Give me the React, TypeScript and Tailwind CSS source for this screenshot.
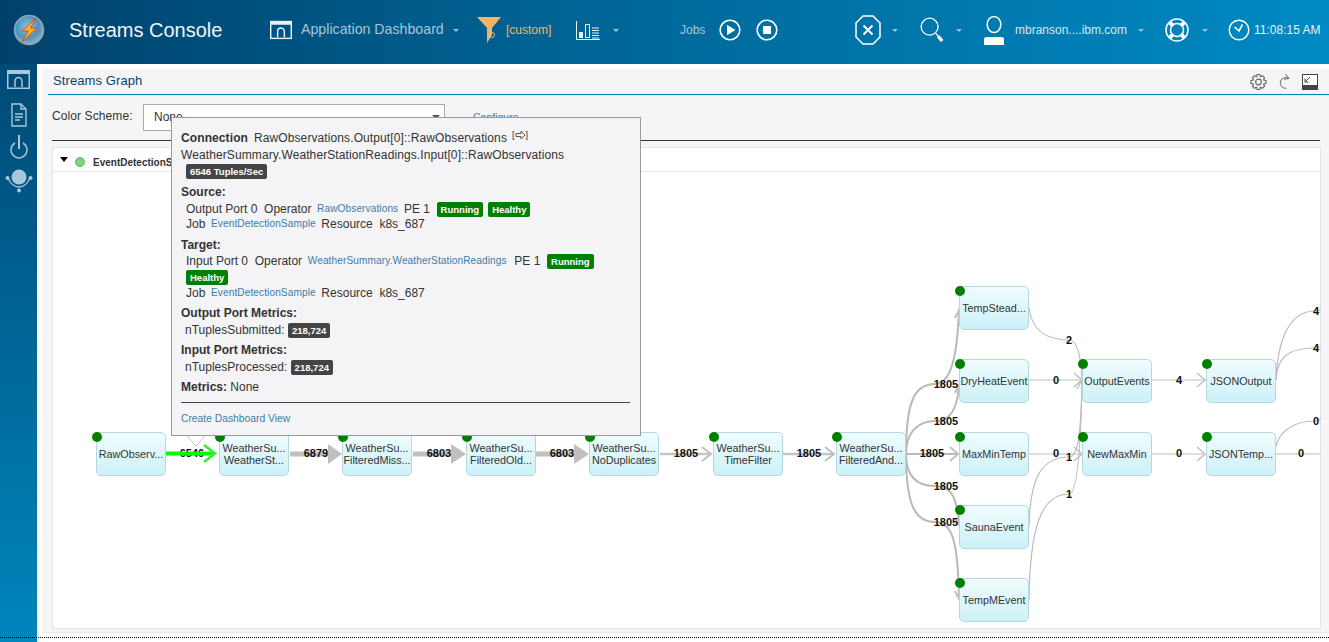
import React from 'react';

type GraphNode = { x: number; y: number; lines: string[] };

const nodes: GraphNode[] = [
  { x: 96, y: 432, lines: ['RawObserv...'] },
  { x: 219, y: 432, lines: ['WeatherSu...', 'WeatherSt...'] },
  { x: 342, y: 432, lines: ['WeatherSu...', 'FilteredMiss...'] },
  { x: 466, y: 432, lines: ['WeatherSu...', 'FilteredOld...'] },
  { x: 589, y: 432, lines: ['WeatherSu...', 'NoDuplicates'] },
  { x: 713, y: 432, lines: ['WeatherSu...', 'TimeFilter'] },
  { x: 836, y: 432, lines: ['WeatherSu...', 'FilteredAnd...'] },
  { x: 959, y: 286, lines: ['TempStead...'] },
  { x: 959, y: 359, lines: ['DryHeatEvent'] },
  { x: 959, y: 432, lines: ['MaxMinTemp'] },
  { x: 959, y: 505, lines: ['SaunaEvent'] },
  { x: 959, y: 578, lines: ['TempMEvent'] },
  { x: 1082, y: 359, lines: ['OutputEvents'] },
  { x: 1082, y: 432, lines: ['NewMaxMin'] },
  { x: 1206, y: 359, lines: ['JSONOutput'] },
  { x: 1206, y: 432, lines: ['JSONTemp...'] },
];

const labels: { x: number; y: number; t: string }[] = [
  { x: 192, y: 453, t: '6546' },
  { x: 316, y: 453, t: '6879' },
  { x: 439, y: 453, t: '6803' },
  { x: 562, y: 453, t: '6803' },
  { x: 686, y: 453, t: '1805' },
  { x: 809, y: 453, t: '1805' },
  { x: 946, y: 384, t: '1805' },
  { x: 946, y: 421, t: '1805' },
  { x: 932, y: 453, t: '1805' },
  { x: 946, y: 486, t: '1805' },
  { x: 946, y: 522, t: '1805' },
  { x: 1069, y: 340, t: '2' },
  { x: 1056, y: 380, t: '0' },
  { x: 1056, y: 453, t: '0' },
  { x: 1069, y: 457, t: '1' },
  { x: 1069, y: 494, t: '1' },
  { x: 1179, y: 380, t: '4' },
  { x: 1179, y: 453, t: '0' },
  { x: 1316, y: 311, t: '4' },
  { x: 1316, y: 348, t: '4' },
  { x: 1316, y: 421, t: '0' },
  { x: 1301, y: 453, t: '0' },
];

const Caret = ({ className = '' }: { className?: string }) => (
  <span className={`inline-block w-0 h-0 border-l-[3px] border-r-[3px] border-t-[3px] border-l-transparent border-r-transparent border-t-[#9fc0d6] ${className}`} />
);

const DashIcon = ({ className = '' }: { className?: string }) => (
  <svg viewBox="0 0 23 19" className={className} fill="none" stroke="currentColor">
    <rect x="0.75" y="0.75" width="21.5" height="17.5" strokeWidth="1.5" />
    <rect x="0" y="0" width="23" height="4" fill="currentColor" stroke="none" />
    <path d="M8 17V11a3.5 3.5 0 0 1 7 0V17" strokeWidth="1.5" />
  </svg>
);

const Logo = () => (
  <svg viewBox="0 0 32 32" className="w-8 h-8">
    <defs>
      <radialGradient id="lg" cx="45%" cy="40%" r="60%">
        <stop offset="0%" stopColor="#8cc4e0" />
        <stop offset="65%" stopColor="#4d93bf" />
        <stop offset="100%" stopColor="#a4b0b6" />
      </radialGradient>
    </defs>
    <circle cx="16" cy="16" r="14.5" fill="url(#lg)" stroke="#8ba6b4" strokeWidth="1.5" />
    <path d="M23 4 L9 17 L15 17 L9 28 L24 14 L17.5 14 Z" fill="#f7b02c" stroke="#d8431f" strokeWidth="0.9" />
  </svg>
);

const HeaderIcons = {
  funnel: (
    <svg viewBox="0 0 24 26" className="w-6 h-[26px]">
      <path d="M0 0H24L15 11V18L10 26V11Z" fill="#f2b468" />
      <circle cx="15" cy="18" r="2.5" fill="none" stroke="#f2b468" />
    </svg>
  ),
  bars: (
    <svg viewBox="0 0 25 19" className="w-[25px] h-[19px]" fill="none" stroke="#e8f1f7">
      <path d="M0.5 0V18.5H24" />
      <rect x="3" y="11" width="4" height="6" fill="#e8f1f7" stroke="none" />
      <rect x="9.5" y="3.5" width="4" height="13" />
      <path d="M16 7H23M16 9.5H23M16 12H23M16 14.5H23M16 17H23" strokeWidth="1.2" />
    </svg>
  ),
  play: (
    <svg viewBox="0 0 22 22" className="w-[22px] h-[22px]" fill="none" stroke="#fff" strokeWidth="1.6">
      <circle cx="11" cy="11" r="9.8" />
      <path d="M8 5.8L16.5 11L8 16.2Z" fill="#fff" stroke="none" />
    </svg>
  ),
  stop: (
    <svg viewBox="0 0 22 22" className="w-[22px] h-[22px]" fill="none" stroke="#fff" strokeWidth="1.6">
      <circle cx="11" cy="11" r="9.8" />
      <rect x="7" y="7" width="8" height="8" fill="#fff" stroke="none" />
    </svg>
  ),
  octagon: (
    <svg viewBox="0 0 26 30" className="w-[26px] h-[30px]" fill="none" stroke="#fff" strokeWidth="1.5">
      <path d="M8 1H18L25 8V22L18 29H8L1 22V8Z" />
      <path d="M8.5 10.5L17.5 19.5M17.5 10.5L8.5 19.5" strokeWidth="2" />
    </svg>
  ),
  search: (
    <svg viewBox="0 0 25 29" className="w-6 h-7" fill="none" stroke="#fff">
      <circle cx="10" cy="11" r="8.8" strokeWidth="1.4" />
      <path d="M16.5 18L23 26" strokeWidth="1.4" />
      <path d="M19 21L23 26" strokeWidth="3.5" />
    </svg>
  ),
  user: (
    <svg viewBox="0 0 20 30" className="w-5 h-[30px]" fill="none" stroke="#fff" strokeWidth="1.5">
      <ellipse cx="10" cy="9.5" rx="6.8" ry="8" />
      <path d="M0 30V24Q0 22 3 22H17Q20 22 20 24V30Z" fill="#fff" stroke="none" />
    </svg>
  ),
  buoy: (
    <svg viewBox="0 0 24 24" className="w-6 h-6" fill="none" stroke="#fff" strokeWidth="1.5">
      <circle cx="12" cy="12" r="11" />
      <circle cx="12" cy="12" r="6.5" />
      <path d="M5 4.5L8 8M19 4.5L16 8M5 19.5L8 16M19 19.5L16 16" strokeWidth="4" />
    </svg>
  ),
  clock: (
    <svg viewBox="0 0 22 22" className="w-[22px] h-[22px]" fill="none" stroke="#fff" strokeWidth="1.4">
      <circle cx="11" cy="11" r="9.8" />
      <path d="M6.5 8L11 12L14.5 5.5" strokeWidth="1.6" />
    </svg>
  ),
};

const Header = () => (
  <header className="h-16 shrink-0 flex items-center pb-[4px] bg-gradient-to-r from-[#00416c] via-[#006a9c] to-[#008ac4] text-white">
    <div className="ml-[13px] w-8 h-8"><Logo /></div>
    <span className="ml-[24px] w-[201px] text-[20px] text-[#f2f6f9]">Streams Console</span>
    <DashIcon className="w-[22px] h-[20px] text-[#e8f1f7]" />
    <span className="ml-[9px] w-[143px] text-[14.2px] text-[#a9c5d9] whitespace-nowrap">Application Dashboard</span>
    <Caret className="ml-[9px]" />
    <div className="ml-[18px] w-6 h-[26px]">{HeaderIcons.funnel}</div>
    <span className="ml-[5px] w-[46px] text-[12px] text-[#f2b468]">[custom]</span>
    <div className="ml-[24px] w-[25px] h-[19px]">{HeaderIcons.bars}</div>
    <Caret className="ml-[12px]" />
    <span className="ml-[61px] w-[28px] text-[12px] text-[#a9c5d9]">Jobs</span>
    <div className="ml-[11px] h-[22px]">{HeaderIcons.play}</div>
    <div className="ml-[15px] h-[22px]">{HeaderIcons.stop}</div>
    <div className="ml-[77px] h-[30px]">{HeaderIcons.octagon}</div>
    <Caret className="ml-[11px]" />
    <div className="ml-[22px] h-7">{HeaderIcons.search}</div>
    <Caret className="ml-[12px]" />
    <div className="ml-[22px] h-[30px]">{HeaderIcons.user}</div>
    <span className="ml-[11px] w-[114px] text-[12px] text-[#d7e6f0] whitespace-nowrap">mbranson....ibm.com</span>
    <Caret className="ml-[9px]" />
    <div className="ml-[21px] h-6">{HeaderIcons.buoy}</div>
    <Caret className="ml-[13px]" />
    <div className="ml-[20px] h-[22px]">{HeaderIcons.clock}</div>
    <span className="ml-[4px] text-[12px] text-[#e8f1f7] whitespace-nowrap">11:08:15 AM</span>
  </header>
);

const Sidebar = () => (
  <aside className="w-[37px] shrink-0 flex flex-col items-center pt-[6px] bg-gradient-to-b from-[#004a76] to-[#0086bd] text-[#a9c6da]">
    <DashIcon className="w-[23px] h-[19px]" />
    <svg viewBox="0 0 16 24" className="mt-[14px] w-4 h-6" fill="none" stroke="currentColor" strokeWidth="1.4">
      <path d="M1 1H10L15 6V23H1Z" />
      <path d="M10 1V6H15" />
      <path d="M4 11H12M4 14H12M4 17H9" />
    </svg>
    <svg viewBox="0 0 18 24" className="mt-[8px] w-[18px] h-6" fill="none" stroke="currentColor" strokeWidth="1.5">
      <path d="M5 8A8 8 0 1 0 13 8" />
      <path d="M9 0V14" strokeWidth="2" />
    </svg>
    <svg viewBox="0 0 28 24" className="mt-[10px] w-7 h-6" fill="currentColor">
      <circle cx="14" cy="8" r="7.5" />
      <path d="M3 9Q7 18 14 18T25 9" fill="none" stroke="currentColor" strokeWidth="1.3" />
      <circle cx="2.5" cy="9" r="2" />
      <circle cx="25.5" cy="9" r="2" />
      <circle cx="14" cy="21.5" r="2" />
    </svg>
  </aside>
);

const Badge = ({ children, green }: { children: React.ReactNode; green?: boolean }) => (
  <span className={`inline-block h-[15px] px-[4px] rounded-[2px] text-[9.5px] leading-[15px] font-bold text-white align-middle whitespace-nowrap ${green ? 'bg-[#008000]' : 'bg-[#444444]'}`}>
    {children}
  </span>
);

const A = ({ children }: { children: React.ReactNode }) => (
  <span className="-mx-px text-[#3c7da8] text-[10.1px] tracking-[0.1px]">{children}</span>
);

const Tooltip = () => (
  <div className="absolute left-[171px] top-[117px] w-[470px] h-[319px] z-20 bg-[#f4f4f6] border border-[#9a9a9a] pl-[9px] pr-[10px] pt-[12px] text-[12px] leading-[16px] text-[#333333]">
    <div className="whitespace-nowrap tracking-[0.1px]">
      <b>Connection</b>
      <span className="ml-[6px]">RawObservations.Output[0]::RawObservations</span>
      <span className="relative -top-[4px] ml-[5px] inline-flex items-center text-[9px] leading-[10px]">
        [
        <svg viewBox="0 0 11 10" className="w-[11px] h-[10px]" fill="none" stroke="#555555">
          <path d="M1 3.5H6V1L10 5L6 9V6.5H1Z" />
        </svg>
        ]
      </span>
    </div>
    <div className="mt-px whitespace-nowrap tracking-[0.1px]">WeatherSummary.WeatherStationReadings.Input[0]::RawObservations</div>
    <div className="ml-[5px] h-[16px] flex items-center"><Badge>6546 Tuples/Sec</Badge></div>
    <div className="mt-[5px] font-bold">Source:</div>
    <div className="mt-px ml-[5px] h-[16px] flex items-center whitespace-pre">
      Output Port 0  Operator  <A>RawObservations</A>  PE 1  <Badge green>Running</Badge><span className="w-[5px]" /><Badge green>Healthy</Badge>
    </div>
    <div className="-mt-px ml-[5px] flex items-center whitespace-pre">Job  <A>EventDetectionSample</A>  Resource  k8s_687</div>
    <div className="mt-[5px] font-bold">Target:</div>
    <div className="ml-[5px] h-[16px] flex items-center whitespace-pre">
      Input Port 0  Operator  <A>WeatherSummary.WeatherStationReadings</A><span className="w-[2px]" />  PE 1  <Badge green>Running</Badge>
    </div>
    <div className="ml-[5px] h-[16px] flex items-center"><Badge green>Healthy</Badge></div>
    <div className="ml-[5px] flex items-center whitespace-pre">Job  <A>EventDetectionSample</A>  Resource  k8s_687</div>
    <div className="mt-[4px] font-bold">Output Port Metrics:</div>
    <div className="mt-px ml-[4px] h-[16px] flex items-center whitespace-pre">nTuplesSubmitted: <Badge>218,724</Badge></div>
    <div className="mt-[4px] font-bold">Input Port Metrics:</div>
    <div className="mt-px ml-[4px] h-[16px] flex items-center whitespace-pre">nTuplesProcessed: <Badge>218,724</Badge></div>
    <div className="mt-[4px]"><b>Metrics:</b> None</div>
    <div className="mt-[7px] h-px bg-[#444444]" />
    <div className="mt-[8px] text-[10.3px] text-[#3c7da8]">Create Dashboard View</div>
    <svg viewBox="0 0 18 11" className="absolute left-[15px] top-[318px] w-[18px] h-[11px]">
      <path d="M0 0L9 10L18 0Z" fill="#ffffff" />
      <path d="M0 0L9 10L18 0" fill="none" stroke="#c4c4c4" />
    </svg>
  </div>
);

const Chevron = ({ d, w = 1.5 }: { d: string; w?: number }) => (
  <path d={d} fill="none" stroke="#c0c0c0" strokeWidth={w} />
);

// the canvas is the whole page coordinate space so nodes keep their graph coordinates
const Graph = () => (
  <div className="absolute left-0 top-0 w-[1321px] h-[630px] overflow-hidden pointer-events-none">
    <svg viewBox="0 0 1321 630" className="absolute inset-0 w-[1321px] h-[630px]" fill="none">
      {/* heavy edges */}
      <path d="M290 454H328M413 454H451M536 454H574" stroke="#c0c0c0" strokeWidth="5" />
      <path d="M328 444L342 454L328 464ZM451 444L466 454L451 464ZM574 444L589 454L574 464Z" fill="#c0c0c0" />
      <path d="M660 454H711M783 454H834" stroke="#c4c4c4" strokeWidth="2.5" />
      <Chevron d="M702 447L711 454L702 461M825 447L834 454L825 461" w={2} />

      {/* fan out from FilteredAnd */}
      <g stroke="#b9b9b9" strokeWidth="2">
        <path d="M906 454C906 400 915 384 935 384C950 384 957 360 959 311" />
        <path d="M906 454C906 430 920 421 935 421C950 421 957 410 959 386" />
        <path d="M906 454H957" />
        <path d="M906 454C906 480 920 486 935 486C950 486 957 495 959 524" />
        <path d="M906 454C906 505 915 522 935 522C952 522 958 540 959 598" />
      </g>
      <Chevron d="M955 318L959 310L963 318M955 393L959 385L963 393M950 447L958 454L950 461M955 518L959 525L963 518M955 591L959 599L963 591" w={2} />

      {/* into OutputEvents and NewMaxMin */}
      <g stroke="#bdbdbd" strokeWidth="1.2">
        <path d="M1029 308C1032 330 1045 340 1069 340C1077 340 1081 355 1082 380" />
        <path d="M1029 380H1081M1029 454H1081" />
        <path d="M1029 527C1030 480 1040 457 1069 457C1077 457 1081 440 1082 381" />
        <path d="M1029 600C1030 530 1040 494 1069 494C1078 494 1081 440 1082 381" />
        <path d="M1152 380H1204M1152 454H1204" />
        <path d="M1276 380C1277 350 1285 311 1315 311C1322 311 1325 305 1330 295" />
        <path d="M1276 380C1277 360 1285 348 1315 348C1320 348 1325 345 1330 340" />
        <path d="M1276 447C1278 435 1290 421 1315 421C1320 421 1322 418 1330 412" />
        <path d="M1276 454H1322" />
      </g>
      <Chevron d="M1074 373L1082 380L1074 387M1074 447L1082 454L1074 461M1197 373L1205 380L1197 387M1197 447L1205 454L1197 461M1077 389L1082 380L1087 389" />

      {labels.map((l, i) => (
        <text key={i} x={l.x} y={l.y + 4} textAnchor="middle" fontSize="11" fontWeight="700" fill="#111111" fontFamily="'Liberation Sans', sans-serif">
          {l.t}
        </text>
      ))}

      {/* hot edge */}
      <path d="M166 453.5H213" stroke="#00ff00" strokeWidth="4" />
      <path d="M204 445L215 453.5L204 462" stroke="#33ee33" strokeWidth="2.5" />
    </svg>
    {nodes.map((n) => (
      <div
        key={`${n.x}-${n.y}`}
        className="absolute w-[70px] h-[44px] pb-px rounded-[5px] border border-[#b4d8e0] bg-gradient-to-b from-[#f0fcfd] to-[#ccf1f8] flex flex-col items-center justify-center text-[10.8px] leading-[12px] text-[#333333] whitespace-nowrap"
        style={{ left: n.x, top: n.y }}
      >
        {n.lines.map((t) => (
          <span key={t}>{t}</span>
        ))}
        <span className="absolute -left-[5px] -top-px w-[10px] h-[10px] rounded-full bg-[#008000]" />
      </div>
    ))}
  </div>
);

export default function App() {
  return (
    <div className="relative w-[1329px] h-[642px] overflow-hidden flex flex-col bg-white font-['Liberation_Sans',Arial,sans-serif]">
      <Header />
      <div className="flex flex-1 min-h-0">
        <Sidebar />
        <main className="flex-1 pl-[5px] pt-[5px]">
          <div className="h-[564px] bg-[#f5f5f5] border-b border-[#e8e8e8] flex flex-col pl-[6px]">
            <div className="h-[26px] flex items-center border-b border-[#0088c0] shrink-0">
              <span className="ml-[5px] -mt-[2px] text-[13px] tracking-[0.1px] text-[#00476f]">Streams Graph</span>
            </div>
            <div className="flex items-center h-[46px] border-b border-[#333333] ml-[4px] mr-[9px] shrink-0">
              <span className="text-[12px] tracking-[0.1px] text-[#333333] w-[91px] -mt-[4px]">Color Scheme:</span>
              <div className="w-[302px] h-[27px] -mt-[1px] bg-white border border-[#aaaaaa] flex items-center justify-between pl-[10px] pr-[4px] text-[12px] text-[#333333]">
                <span>None</span>
                <span className="w-0 h-0 border-l-[4px] border-r-[4px] border-t-[4px] border-l-transparent border-r-transparent border-t-[#555555]" />
              </div>
              <span className="ml-[28px] text-[10.5px] text-[#3c7da8]">Configure</span>
            </div>
            <div className="mt-[6px] ml-[4px] flex-1 bg-white border border-[#e4e4e4] mr-[8px] mb-[3px]">
              <div className="h-[24px] flex items-center border-b border-[#e4e4e4] pl-[7px] pt-[5px]">
                <span className="w-0 h-0 border-l-[4px] border-r-[4px] border-t-[5px] border-l-transparent border-r-transparent border-t-black -mt-[5px]" />
                <span className="ml-[7px] w-[10px] h-[10px] rounded-full bg-[#7fd37f] border border-[#5fb85f]" />
                <span className="ml-[8px] text-[10px] font-bold text-[#333333]">EventDetectionSample</span>
              </div>
            </div>
          </div>
          <div className="mt-[4px] -ml-[42px] border-t border-dotted border-black" />
        </main>
      </div>

      {/* panel actions */}
      <div className="absolute left-[1250px] top-[73px] flex items-center gap-[11px] text-[#666666]">
        <svg viewBox="0 0 18 18" className="w-[17px] h-[18px]" fill="none" stroke="currentColor" strokeWidth="1.2">
          <circle cx="9" cy="9" r="3" />
          <path d="M7.5 1H10.5L11 3.4L13.2 2.4L15.4 4.6L14.4 6.8L17 7.5V10.5L14.4 11.2L15.4 13.4L13.2 15.6L11 14.6L10.5 17H7.5L7 14.6L4.8 15.6L2.6 13.4L3.6 11.2L1 10.5V7.5L3.6 6.8L2.6 4.6L4.8 2.4L7 3.4Z" />
        </svg>
        <svg viewBox="0 0 14 20" className="w-[13px] h-[18px]" fill="none" stroke="currentColor" strokeWidth="1.1">
          <path d="M11.5 6A6 6 0 1 0 9 17" />
          <path d="M8 1L12 6L6.5 7" />
        </svg>
        <svg viewBox="0 0 16 16" className="w-4 h-4" fill="none" stroke="#444444">
          <rect x="0.5" y="0.5" width="15" height="15" fill="#ffffff" />
          <rect x="0" y="11" width="16" height="5" fill="#444444" stroke="none" />
          <path d="M8 3L3 8M3 4.5V8H6.5" />
        </svg>
      </div>

      <Graph />
      <Tooltip />
    </div>
  );
}
